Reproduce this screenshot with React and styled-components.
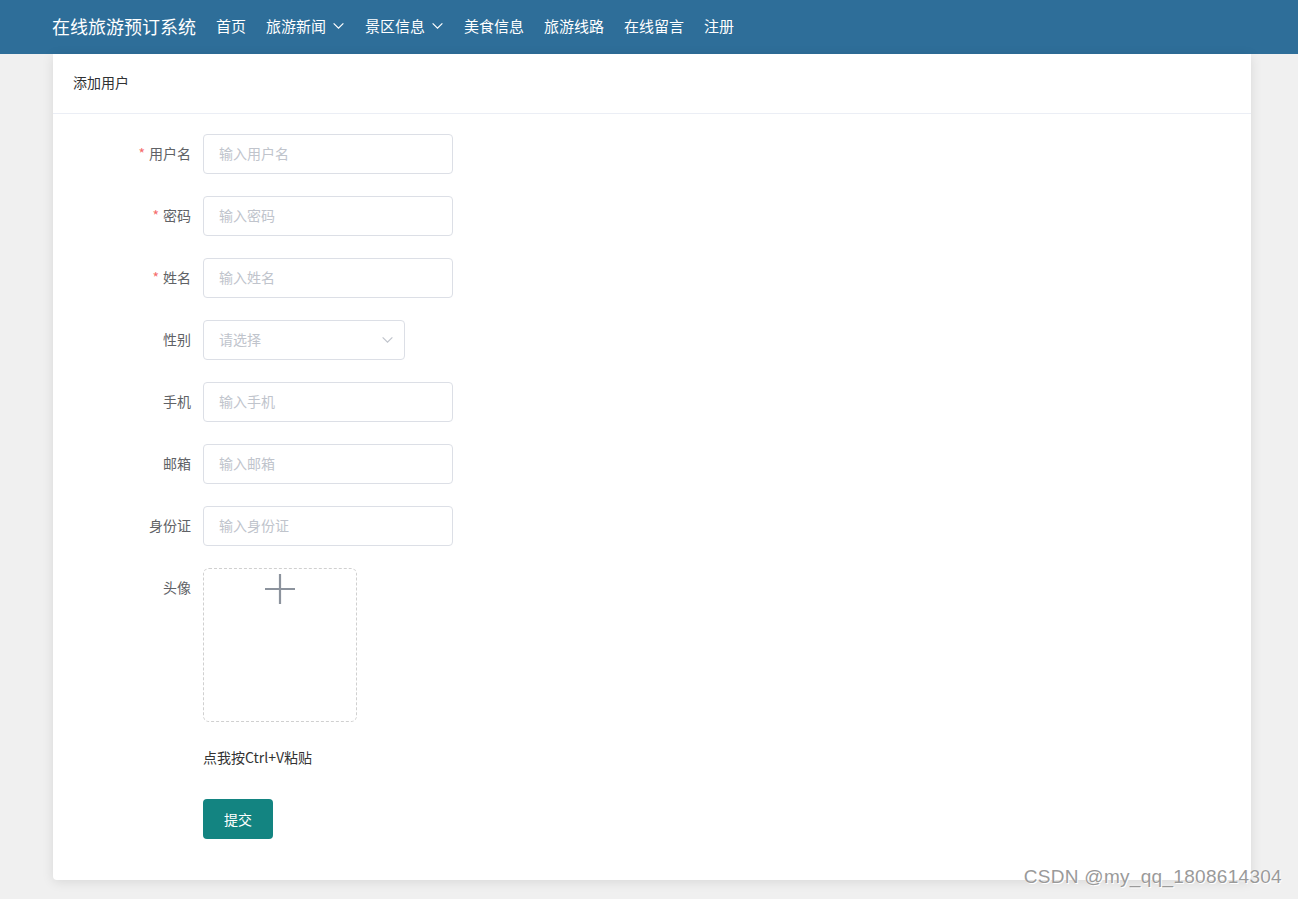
import React from "react";
import styled, { createGlobalStyle } from "styled-components";

const Global = createGlobalStyle`
  html, body { margin: 0; padding: 0; }
  body {
    background: #f0f0f0;
    font-family: "Noto Sans CJK SC", "Noto Sans", sans-serif;
    min-height: 100vh;
  }
  * { box-sizing: border-box; }
`;

const Page = styled.div`
  min-height: 899px;
  position: relative;
`;

const Header = styled.header`
  height: 54px;
  background: #2e6e99;
  display: flex;
  align-items: center;
  padding-left: 52px;
  gap: 20px;
  color: #fff;
`;

const Brand = styled.div`
  font-size: 18px;
  line-height: 24px;
  margin-top: -3px;
`;

const Nav = styled.nav`
  display: flex;
  align-items: center;
  gap: 20px;
`;

const NavItem = styled.a`
  font-size: 15px;
  font-weight: 400;
  color: #fff;
  text-decoration: none;
  display: flex;
  align-items: center;
  gap: 6px;
  margin-top: -4px;
`;

const Card = styled.section`
  margin: 0 47px 0 53px;
  width: 1198px;
  background: #fff;
  box-shadow: 0 2px 12px rgba(0, 0, 0, 0.1);
  border-radius: 0 0 4px 4px;
`;

const CardHead = styled.div`
  padding: 18px 20px 20px;
  font-size: 14px;
  line-height: 21px;
  color: #303133;
  border-bottom: 1px solid #ebeef5;
`;

const CardBody = styled.div`
  padding: 20px 20px 19px;
`;

const Row = styled.div`
  display: flex;
  align-items: flex-start;
  margin-bottom: ${(p) => (p.$flush ? 0 : 22)}px;
`;

const Label = styled.label`
  width: 130px;
  padding-right: 12px;
  text-align: right;
  font-size: 14px;
  line-height: 38px;
  color: #606266;
  flex-shrink: 0;
`;

const Star = styled.span`
  color: #f56c6c;
  margin-right: 4px;
`;

const Input = styled.input`
  width: ${(p) => p.$w || 250}px;
  height: 40px;
  border: 1px solid #dcdfe6;
  border-radius: 4px;
  padding: 0 15px 2px;
  font-size: 14px;
  font-family: inherit;
  color: #606266;
  outline: none;
  &::placeholder { color: #c0c4cc; }
`;

const SelectBox = styled.div`
  width: 202px;
  height: 40px;
  border: 1px solid #dcdfe6;
  border-radius: 4px;
  padding: 0 10px 2px 15px;
  display: flex;
  align-items: center;
  justify-content: space-between;
  font-size: 14px;
  color: #c0c4cc;
`;

const Upload = styled.div`
  width: 154px;
  height: 154px;
  border: 1px dashed #d0d0d0;
  border-radius: 6px;
  display: flex;
  justify-content: center;
  padding-top: 5px;
`;

const PasteHint = styled.div`
  margin-left: 130px;
  font-size: 14px;
  line-height: 20px;
  color: #333;
  margin-top: 25px;
  margin-bottom: 32px;
`;

const Submit = styled.button`
  margin-left: 130px;
  width: 70px;
  height: 40px;
  border: none;
  border-radius: 4px;
  background: #138481;
  color: #fff;
  font-size: 14px;
  font-family: inherit;
  cursor: pointer;
`;

const Watermark = styled.div`
  position: absolute;
  right: 16px;
  top: 866px;
  font-family: "Liberation Sans", Arial, sans-serif;
  font-size: 19px;
  letter-spacing: 0.3px;
  color: #9a9a9a;
  text-shadow: 0 0 1px #fff, 1px 1px 0 #fff;
`;

const Chevron = ({ color = "#fff", size = 13 }) => (
  <svg width={size} height={size} viewBox="0 0 12 12" fill="none">
    <path d="M1.5 4 L6 8.5 L10.5 4" stroke={color} strokeWidth="1.1" />
  </svg>
);

const Plus = () => (
  <svg width="30" height="30" viewBox="0 0 30 30">
    <path d="M15 0 V30 M0 15 H30" stroke="#8c939d" strokeWidth="2.2" />
  </svg>
);

const fields = [
  { label: "用户名", ph: "输入用户名", req: true },
  { label: "密码", ph: "输入密码", req: true },
  { label: "姓名", ph: "输入姓名", req: true },
];
const fields2 = [
  { label: "手机", ph: "输入手机" },
  { label: "邮箱", ph: "输入邮箱" },
  { label: "身份证", ph: "输入身份证" },
];

export default function App() {
  return (
    <Page>
      <Global />
      <Header>
        <Brand>在线旅游预订系统</Brand>
        <Nav>
          <NavItem>首页</NavItem>
          <NavItem>旅游新闻<Chevron /></NavItem>
          <NavItem>景区信息<Chevron /></NavItem>
          <NavItem>美食信息</NavItem>
          <NavItem>旅游线路</NavItem>
          <NavItem>在线留言</NavItem>
          <NavItem>注册</NavItem>
        </Nav>
      </Header>
      <Card>
        <CardHead>添加用户</CardHead>
        <CardBody>
          {fields.map((f) => (
            <Row key={f.label}>
              <Label>{f.req && <Star>*</Star>}{f.label}</Label>
              <Input placeholder={f.ph} />
            </Row>
          ))}
          <Row>
            <Label>性别</Label>
            <SelectBox>
              请选择
              <Chevron color="#c0c4cc" size={13} />
            </SelectBox>
          </Row>
          {fields2.map((f) => (
            <Row key={f.label}>
              <Label>{f.label}</Label>
              <Input placeholder={f.ph} />
            </Row>
          ))}
          <Row $flush>
            <Label>头像</Label>
            <Upload><Plus /></Upload>
          </Row>
          <PasteHint>点我按Ctrl+V粘贴</PasteHint>
          <Row>
            <Submit>提交</Submit>
          </Row>
        </CardBody>
      </Card>
      <Watermark>CSDN @my_qq_1808614304</Watermark>
    </Page>
  );
}
